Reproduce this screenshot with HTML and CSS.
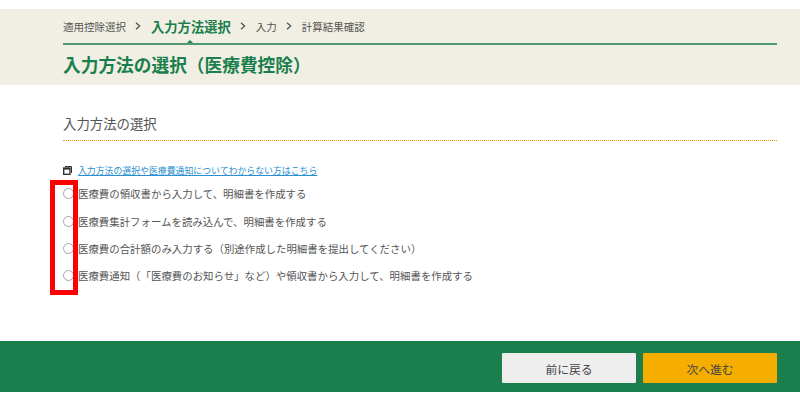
FILE: index.html
```html
<!DOCTYPE html>
<html lang="ja">
<head>
<meta charset="utf-8">
<title>入力方法の選択</title>
<link rel="stylesheet" href="styles.css">
</head>
<body>
<div class="page">
  <header class="head">
    <nav class="crumbs">
      <span>適用控除選択</span>
      <svg class="chev" viewBox="0 0 6 8"><path d="M1 .8 4.6 4 1 7.2" fill="none" stroke="#555" stroke-width="1.3"/></svg>
      <span class="current">入力方法選択</span>
      <svg class="chev" viewBox="0 0 6 8"><path d="M1 .8 4.6 4 1 7.2" fill="none" stroke="#555" stroke-width="1.3"/></svg>
      <span>入力</span>
      <svg class="chev" viewBox="0 0 6 8"><path d="M1 .8 4.6 4 1 7.2" fill="none" stroke="#555" stroke-width="1.3"/></svg>
      <span>計算結果確認</span>
    </nav>
    <h1 class="title">入力方法の選択（医療費控除）</h1>
  </header>
  <main class="body">
    <h2 class="section">入力方法の選択</h2>
    <div class="helper">
      <svg class="win" viewBox="0 0 9 9"><path d="M2 .5h6.5V7" fill="none" stroke="#333" stroke-width="1"/><rect x=".7" y="2" width="6.3" height="6.3" fill="#fff" stroke="#333" stroke-width="1.4"/><rect x=".7" y="2" width="6.3" height="1.6" fill="#333"/></svg>
      <a class="link" href="#">入力方法の選択や医療費通知についてわからない方はこちら</a>
    </div>
    <div class="options">
      <label class="opt"><span class="radio"></span>医療費の領収書から入力して、明細書を作成する</label>
      <label class="opt"><span class="radio"></span>医療費集計フォームを読み込んで、明細書を作成する</label>
      <label class="opt"><span class="radio"></span>医療費の合計額のみ入力する（別途作成した明細書を提出してください）</label>
      <label class="opt"><span class="radio"></span>医療費通知（「医療費のお知らせ」など）や領収書から入力して、明細書を作成する</label>
      <div class="mark"></div>
    </div>
  </main>
  <footer class="foot">
    <button class="btn back">前に戻る</button>
    <button class="btn next">次へ進む</button>
  </footer>
</div>
</body>
</html>
```
FILE: styles.css
```css
* { box-sizing: border-box; }
html, body { margin: 0; padding: 0; background: #fff; }
body { font-family: "Noto Sans CJK JP", "Noto Sans", sans-serif; color: #555; text-spacing-trim: space-all; }
.page { width: 800px; height: 400px; padding-top: 9px; overflow: hidden; }
.head { height: 76px; background: #f1efe4; padding: 0 23px 0 63px; }
.crumbs { height: 36px; display: flex; align-items: center; border-bottom: 2px solid #4f9a70; font-size: 10.5px; color: #555; position: relative; }
.crumbs::after { content: ""; position: absolute; left: 124px; bottom: 0; border: 3px solid transparent; border-top: 0; border-bottom: 3px solid #1a7f4c; }
.current { font-size: 13.3px; font-weight: 700; color: #1a7f4c; }
.chev { width: 6px; height: 8px; margin: 0 10px 0 9px; }
.title { margin: 0; font-size: 17.7px; line-height: 38px; font-weight: 700; color: #1a7f4c; }
.body { padding: 0 23px 0 63px; height: 256px; }
.section { margin: 0; height: 56px; padding-top: 28px; font-size: 13.4px; line-height: 20px; font-weight: 400; color: #555; border-bottom: 1px dotted #f59200; }
.helper { display: flex; align-items: center; margin-top: 22px; height: 14px; }
.win { width: 9px; height: 9px; margin-right: 6px; flex: none; }
.link { font-size: 8.9px; color: #2a8fd0; text-decoration: underline; }
.options { position: relative; margin-left: -63px; padding-left: 63px; margin-top: 3px; }
.opt { display: flex; align-items: center; height: 27.4px; font-size: 10.43px; color: #555; }
.radio { width: 11px; height: 11px; border: 1px solid #a5a5a5; border-radius: 50%; background: #fff; margin-right: 4px; flex: none; }
.mark { position: absolute; left: 50px; top: 0; width: 28px; height: 115px; border: 5px solid #f00; }
.foot { height: 51px; background: #1a7f4c; display: flex; justify-content: flex-end; align-items: flex-start; gap: 7px; padding: 12px 23px 0 0; }
.btn { width: 134px; height: 30px; border: 0; border-radius: 1px; font: inherit; font-size: 11.8px; padding: 0; }
.back { background: #eee; color: #444; }
.next { background: #f5ae00; color: #444; }
```
